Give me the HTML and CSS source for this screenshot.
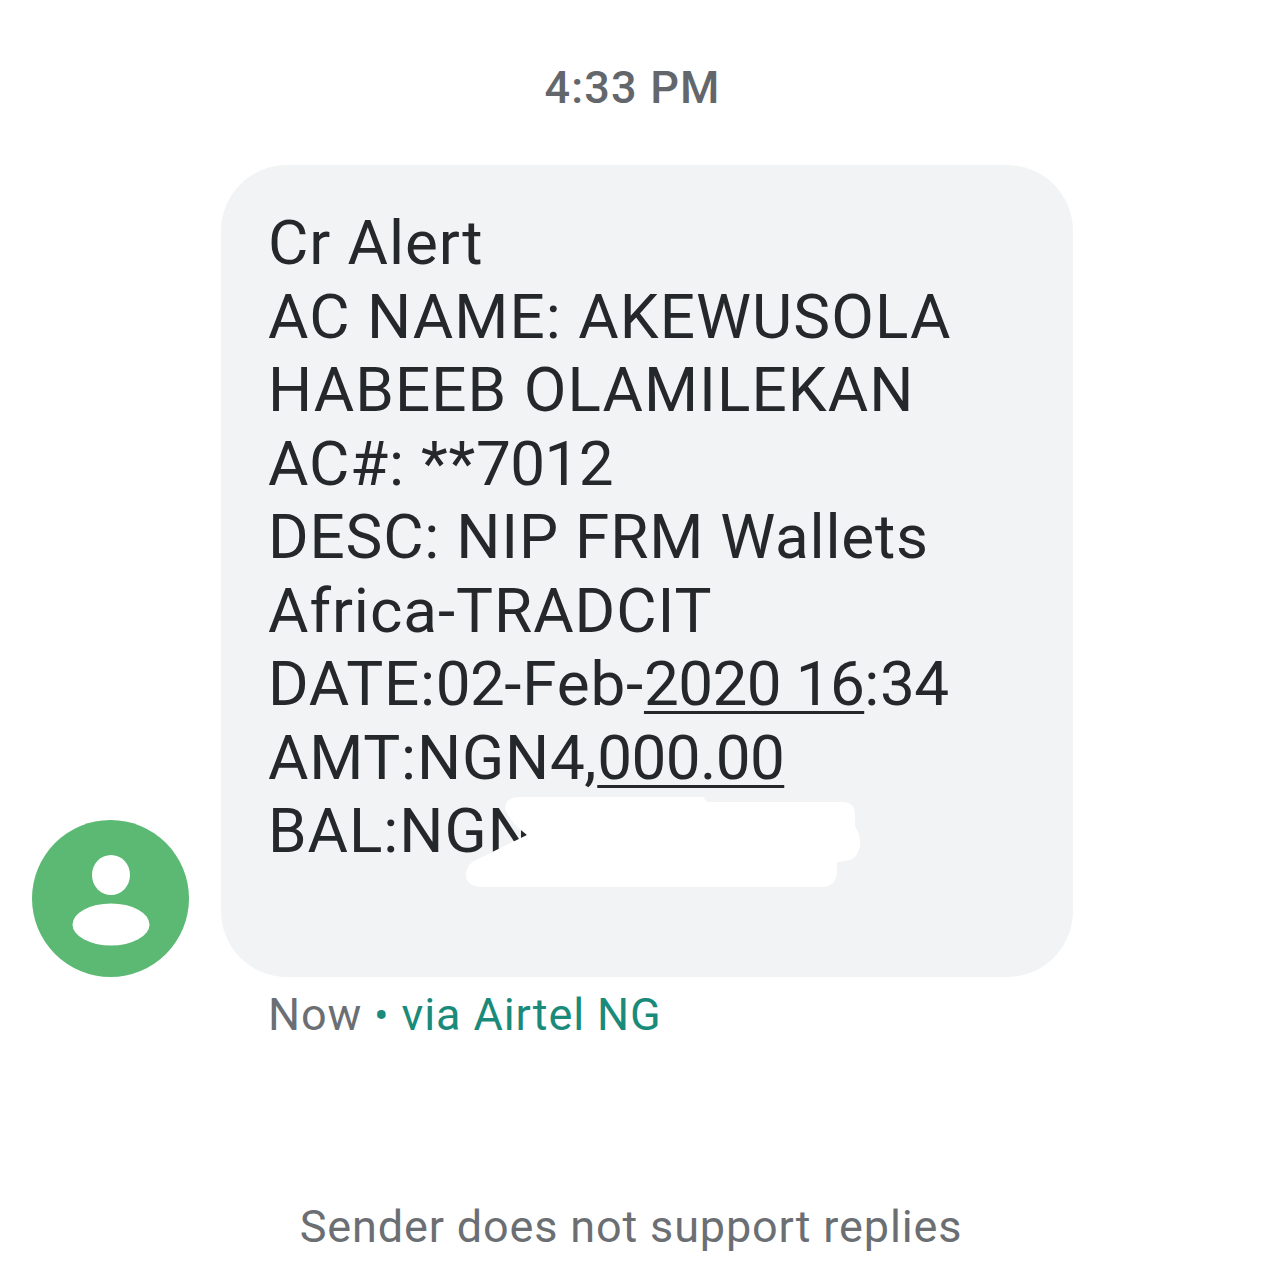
FILE: index.html
```
<!DOCTYPE html>
<html lang="en">
<head>
<meta charset="utf-8">
<title>Message</title>
<link rel="stylesheet" href="styles.css">
</head>
<body>
<main class="thread">
  <div class="time">4:33 PM</div>
  <div class="row">
    <div class="avatar">
      <svg viewBox="0 0 157 157" width="157" height="157"><circle cx="78.500" cy="78.500" r="78.500" fill="#5bb974"/><ellipse cx="79" cy="55" rx="19" ry="20" fill="#fff"/><ellipse cx="79" cy="104.500" rx="38.500" ry="21" fill="#fff"/></svg>
    </div>
    <div class="column">
      <div class="bubble">
        <div class="line">Cr Alert</div>
        <div class="line caps">AC NAME: AKEWUSOLA</div>
        <div class="line caps">HABEEB OLAMILEKAN</div>
        <div class="line tight">AC#: **<span class="n">7012</span></div>
        <div class="line tight">DESC: NIP FRM Wallets</div>
        <div class="line">Africa-TRADCIT</div>
        <div class="line tight">DATE:<span class="n">02</span>-Feb-<u class="n">2020 16</u>:<span class="n">34</span></div>
        <div class="line tight">AMT:NGN<span class="n">4</span>,<u class="n">000.00</u></div>
        <div class="line">BAL:NGN</div>
        <svg class="redact" viewBox="221 165 852 812" width="852" height="812"><path fill="#fff" d="M520 797H703L707 802H842Q855 802 855 815V826Q861 836 860 845Q858 860 845 861L837 862V873Q836 887 820 887H484Q466 887 466 875Q466 866 474 861L527 835L516 826Q505 812 505 808Q506 797 520 797Z"/></svg>
      </div>
      <div class="meta">Now <span class="dot">•</span> <span class="via">via Airtel NG</span></div>
    </div>
  </div>
  <div class="foot">Sender does not support replies</div>
</main>
</body>
</html>
```
FILE: styles.css
```
* { box-sizing: border-box; }
html, body { margin: 0; background: #fff; }
body { font-family: Roboto, "Liberation Sans", sans-serif; }
.thread { width: 1262px; height: 1280px; padding-top: 60px; display: flex; flex-direction: column; overflow: hidden; }
.time { height: 56px; line-height: 56px; padding-left: 3px; text-align: center; font-size: 45px; font-weight: 500; letter-spacing: 1.2px; color: #63676b; }
.row { margin-top: 49px; padding-left: 32px; display: flex; align-items: flex-start; }
.avatar { width: 157px; height: 157px; margin-top: 655px; margin-right: 32px; flex: none; }
.avatar svg { display: block; }
.column { display: flex; flex-direction: column; }
.bubble { position: relative; width: 852px; height: 812px; padding: 41px 47px 0; background: #f1f3f4; border-radius: 66px; color: #25282b; font-size: 62px; letter-spacing: 0.95px; }
.line { height: 73.500px; line-height: 73.500px; white-space: nowrap; }
.caps { letter-spacing: 1.05px; }
.tight { letter-spacing: 0.8px; }
.n { letter-spacing: -0.6px; }
.line u { text-underline-offset: 6px; text-decoration-thickness: 3px; }
.redact { position: absolute; left: 0; top: 0; display: block; }
.meta { margin-top: 12px; padding-left: 47px; font-size: 45px; line-height: 52px; letter-spacing: 0.9px; color: #6b6f73; white-space: nowrap; }
.dot { color: #1a8a7a; font-size: 42px; line-height: 0; }
.via { color: #1a8a7a; }
.foot { margin-top: 160px; text-align: center; font-size: 45px; line-height: 52px; letter-spacing: 0.850px; color: #6b6f73; }
```
